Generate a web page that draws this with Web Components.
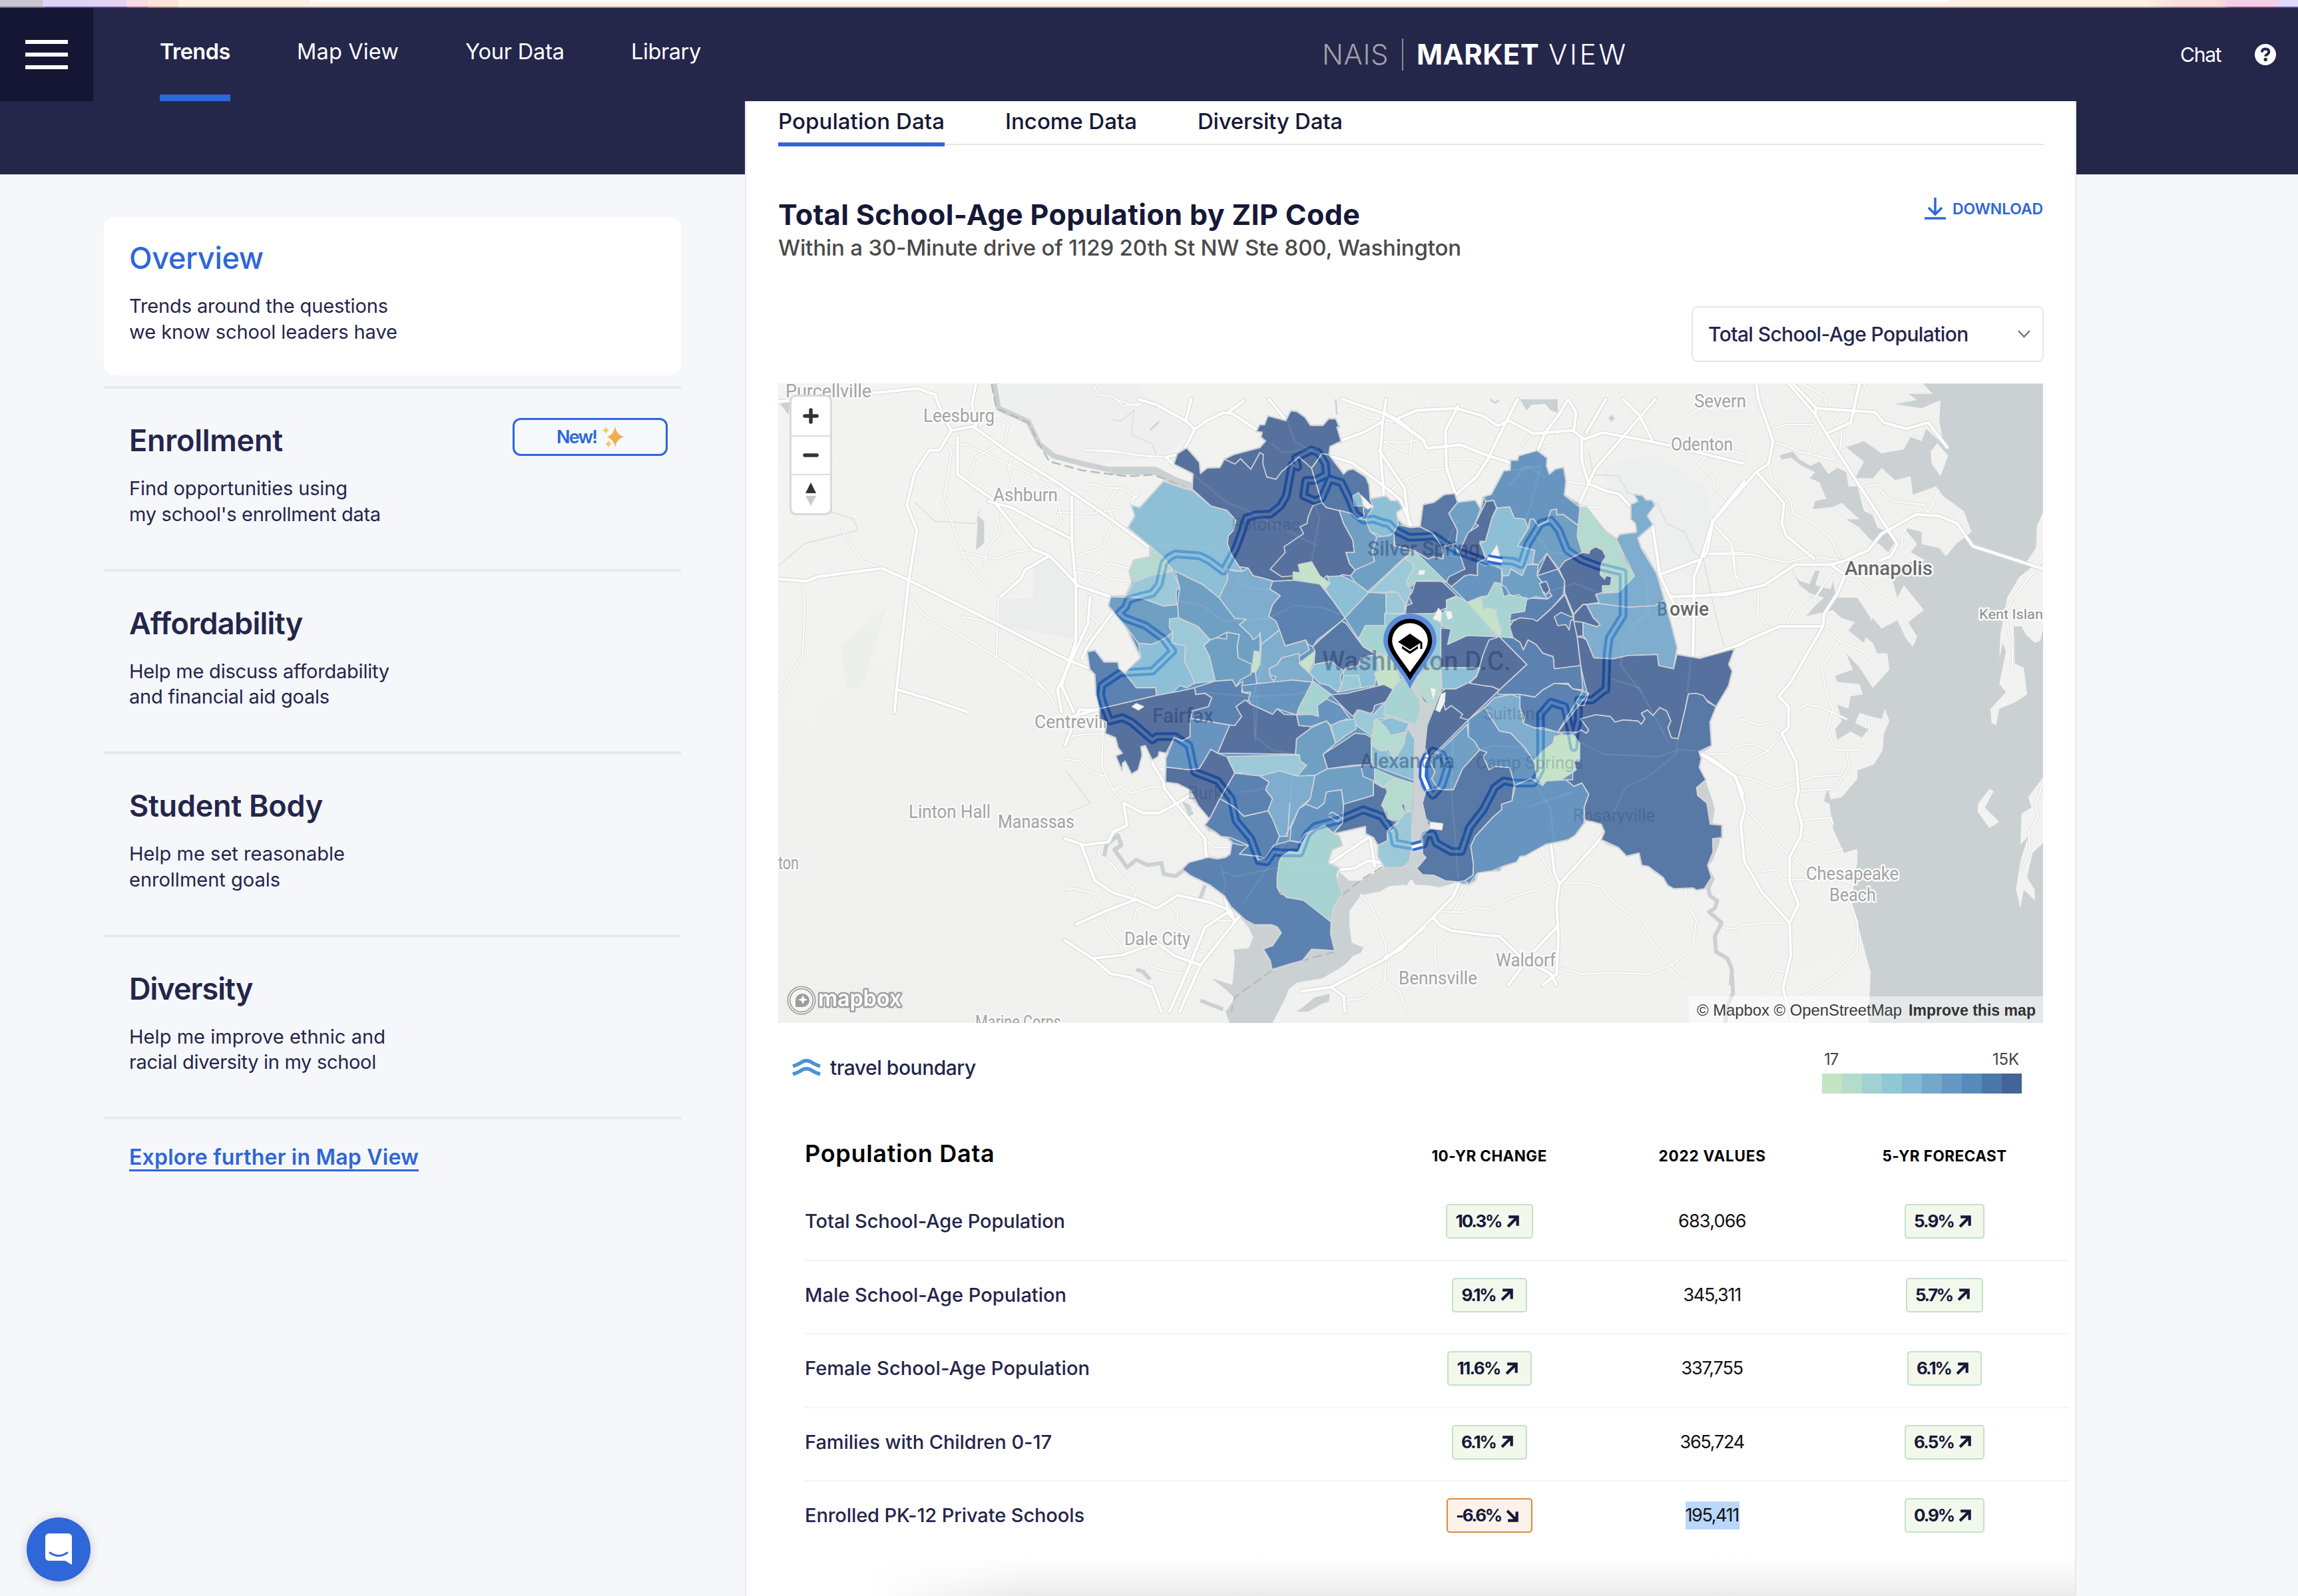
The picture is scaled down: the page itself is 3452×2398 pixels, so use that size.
<!DOCTYPE html>
<html lang="en">
<head>
<meta charset="utf-8">
<title>NAIS Market View</title>
<style>
html,body{margin:0;background:#f5f7fb}
body{width:3452px;height:2398px;overflow:hidden;position:relative;font-family:Inter,"Open Sans","Liberation Sans",sans-serif;color:#24264a}
</style>
</head>
<body>
<market-app></market-app>
<script>
const define=(name,html,init)=>{
  const t=document.createElement('template');t.innerHTML=html;
  customElements.define(name,class extends HTMLElement{
    constructor(){super();this.attachShadow({mode:'open'}).append(t.content.cloneNode(true));}
    connectedCallback(){if(init&&!this.ready){this.ready=true;init.call(this,this.shadowRoot);}}
  });
};

/* One line of text tracked to a given width */
define('t-line',`<style>:host{display:block;white-space:nowrap;flex:none}span{display:inline-block}</style><span><slot></slot></span>`,function(r){
  const w=+this.getAttribute('w'),s=this.getAttribute('s'),f=this.getAttribute('f');
  if(s)this.style.fontSize=s+'px';
  if(f)this.style.fontWeight=f;
  if(this.getAttribute('h'))this.style.lineHeight=this.getAttribute('h')+'px';
  if(w){this.style.width=w+'px';
    const sp=r.querySelector('span'),n=this.textContent.length,nat=sp.getBoundingClientRect().width;
    if(nat&&n>1)sp.style.letterSpacing=((w-nat)/(n-.5)).toFixed(3)+'px';}
});

define('window-edge',`<style>:host{display:block;height:12px;box-sizing:border-box;
background:linear-gradient(90deg,transparent 466px,#fffdfc 466px 2928px,transparent 2928px) 0 0/100% 3px no-repeat,
linear-gradient(90deg,#6d6880 67px,#6a3fae 67px 192px,#a84a80 192px 222px,#b87752 222px 268px,#ab8b78 268px 3240px,#b07070 3260px 3340px,#9c3a88 3350px 3422px,#6743b8 3424px) 0 10px/100% 2px no-repeat,
linear-gradient(90deg,#c9c6d0 64px,#dcd3f8 64px,#e3d3f2 190px,#f9dbe2 190px 222px,#fbe4da 222px 268px,#fdf1e6 268px 3220px,#fae0da 3270px 3330px,#f3d0e8 3345px 3420px,#e0d9fb 3422px)}</style>`);

define('nav-item',`<style>:host{display:flex;flex-direction:column;height:140px;box-sizing:border-box;padding-top:38px;color:#fff;justify-content:space-between}
i{display:block;height:10px}:host([active]) i{background:#2f66d8}</style><slot></slot><i></i>`);

define('top-nav',`<style>
:host{display:flex;height:140px;background:#24264a;color:#fff;align-items:stretch}
.menu{width:140px;background:#151633;display:flex;flex-direction:column;gap:13px;align-items:center;justify-content:center}
.menu b{display:block;width:64px;height:6px;background:#fff}
nav{display:flex;margin-left:100px;gap:100px;width:849px}
.logo{display:flex;align-items:center;margin-left:897px;height:140px;gap:20px}
.logo .m{display:flex;gap:14px}
.logo .v{width:2px;height:48px;background:#8b8b98}
.grey{color:#a0a0a6}
.r{display:flex;margin-left:831px;align-items:center;gap:50px}
</style>
<div class="menu"><b></b><b></b><b></b></div>
<nav><nav-item active><t-line s="32.5" f="600" h="56" w="106">Trends</t-line></nav-item>
<nav-item><t-line s="32.5" f="400" h="56" w="153">Map View</t-line></nav-item>
<nav-item><t-line s="32.5" f="400" h="56" w="149">Your Data</t-line></nav-item>
<nav-item><t-line s="32.5" f="400" h="56" w="105">Library</t-line></nav-item></nav>
<div class="logo"><t-line class="grey" s="42" f="300" h="60" w="100">NAIS</t-line><div class="v"></div>
<div class="m"><t-line s="42" f="700" h="60" w="184">MARKET</t-line><t-line s="42" f="300" h="60" w="118">VIEW</t-line></div></div>
<div class="r"><t-line s="30" f="400" h="40" w="62">Chat</t-line>
<svg width="32" height="32" viewBox="0 0 32 32"><circle cx="16" cy="16" r="16" fill="#fff"/><path d="M10.8 12.6Q11 7.6 16 7.5Q21.4 7.7 21.3 12Q21 14.3 18.2 15.9Q16.2 17 16.2 18.8" fill="none" stroke="#24264a" stroke-width="4"/><circle cx="16.2" cy="23.4" r="2.6" fill="#24264a"/></svg></div>`);

define('side-item',`<style>
:host{display:block;height:274.5px;box-sizing:border-box;border-top:4px solid #e8e9ed;padding:54px 20px 0 38px;color:#24264a}
:host([selected]){background:#fff;border:0;border-radius:17px;height:238px;margin-bottom:16px;padding-top:35px}
.h{display:flex;justify-content:space-between;height:48px}
:host([selected]) .h{color:#2f66d8}
.h ::slotted(new-badge){margin-top:-10px}
.d{display:flex;flex-direction:column;margin-top:29px}
:host([selected]) .d{margin-top:32px}
</style><div class="h"><slot name="title"></slot><slot name="badge"></slot></div><div class="d"><slot></slot></div>`);

define('new-badge',`<style>:host{display:flex;width:233px;height:57px;box-sizing:border-box;border:3px solid #2f66d8;border-radius:12px;background:#f5f9fc;color:#2f66d8;align-items:center;justify-content:center;gap:8px}</style>
<t-line s="27" f="600" h="40" w="61">New!</t-line><svg width="32" height="32" viewBox="0 0 32 32"><path d="M19 0Q20.5 12 32 15.5Q20.500 19 19 31Q17 19 7 15.500Q17 12 19 0Z" fill="#f0ad4c"/><path d="M5 0Q6 4 10 5.500Q6 7 5 11Q4 7 0 5.500Q4 4 5 0ZM9 20Q10 24.500 14 26Q10 27.500 9 32Q8 27.500 4 26Q8 24.500 9 20Z" fill="#f6c860"/></svg>`);

define('side-menu',`<style>:host{display:block;width:867px;margin:174px 0 0 156px;flex:none}
.link{border-top:4px solid #e8e9ed;padding:40px 0 0 38px;color:#2f66d8}
.link div{width:435px;border-bottom:3px solid #2f66d8;height:35px}</style>
<side-item selected><t-line slot="title" s="45" f="500" h="53" w="202">Overview</t-line><t-line s="29" h="38.5" w="389">Trends around the questions</t-line><t-line s="29" h="38.5" w="403">we know school leaders have</t-line></side-item>
<side-item><t-line slot="title" s="45" f="600" h="48" w="231">Enrollment</t-line><new-badge slot="badge"></new-badge><t-line s="29" h="38.5" w="328">Find opportunities using</t-line><t-line s="29" h="38.5" w="378">my school's enrollment data</t-line></side-item>
<side-item><t-line slot="title" s="45" f="600" h="48" w="261">Affordability</t-line><t-line s="29" h="38.5" w="391">Help me discuss affordability</t-line><t-line s="29" h="38.5" w="301">and financial aid goals</t-line></side-item>
<side-item><t-line slot="title" s="45" f="600" h="48" w="291">Student Body</t-line><t-line s="29" h="38.5" w="324">Help me set reasonable</t-line><t-line s="29" h="38.5" w="227">enrollment goals</t-line></side-item>
<side-item><t-line slot="title" s="45" f="600" h="48" w="186">Diversity</t-line><t-line s="29" h="38.5" w="385">Help me improve ethnic and</t-line><t-line s="29" h="38.5" w="371">racial diversity in my school</t-line></side-item>
<div class="link"><div><t-line s="32" f="600" h="34" w="435">Explore further in Map View</t-line></div></div>`);

define('data-tabs',`<style>:host{display:flex;gap:91px;height:66px;box-sizing:border-box;border-bottom:2px solid #e5e5e5;padding-top:4px;color:#161838}
.t{height:64px;box-sizing:border-box;padding-top:6px}.on{border-bottom:6px solid #2f66d8}</style>
<div class="t on"><t-line s="33" f="500" h="40" w="250">Population Data</t-line></div><div class="t"><t-line s="33" f="500" h="40" w="198">Income Data</t-line></div><div class="t"><t-line s="33" f="500" h="40" w="218">Diversity Data</t-line></div>`);

/* Map drawing data. Each letter starts a survey sheet with its own origin and scale; points follow. */
const sheets={A:[1600,600,.3444,.3333],B:[2080,600,.3444,.3333],C:[1600,1040,.3444,.3333],D:[2080,1000,.3444,.3333],E:[2560,570,.3333,.6186],F:[1160,570,.6122,.3333]};
const pts=s=>{let t,o=[];for(const k of s.trim().split(/\s+/)){if(sheets[k]){t=sheets[k];continue}const[a,b]=k.split(',');o.push((t[0]+a*t[2]).toFixed(1)+','+(t[1]+b*t[3]).toFixed(1))}return o.join(' ')};
const ramp={0:'#57719e',x:'#5878a5',1:'#5b82b1',2:'#6795c0',3:'#709fc4',4:'#7eadce',5:'#8dbfd6',6:'#9bc9d7',7:'#a7d3d2',8:'#b5dacf',9:'#c4e3c8'};
const outline='A 530,220 565,260 585,285 590,335 620,310 675,308 695,270 735,250 850,218 875,188 855,170 860,148 835,145 848,115 870,115 885,75 962,97 985,52 1010,55 1045,80 1070,118 1125,118 1150,88 1180,88 1195,125 1185,125 1203,188 1155,212 1150,250 1215,338 1232,320 1258,315 1310,350 1325,385 1330,450 1380,440 1400,437 1420,458 1452,458 1470,490 1445,510 1447,535 1475,565 1510,578 1550,575 B 155,575 168,475 215,465 260,430 305,425 318,465 395,455 418,495 430,440 465,430 520,323 548,320 550,275 580,275 585,255 625,255 665,232 708,265 705,300 718,338 745,315 780,308 790,370 783,432 845,468 852,487 880,487 960,592 1012,632 1025,610 1100,600 1095,560 1075,540 1075,475 1105,460 1090,430 1125,435 1140,455 1165,455 1178,478 1150,495 1145,525 1168,565 1103,625 1118,670 1130,685 1185,785 1210,870 1248,1010 1275,1120 1270,1150 1375,1168 1525,1125 1500,1195 1515,1225 1500,1290 1480,1325 1445,1385 D 1445,185 1418,255 1425,360 1400,380 1370,388 1380,420 1372,460 1400,515 1360,550 1365,585 1405,620 1420,715 1470,720 1470,775 1430,780 1432,840 1408,900 1425,955 1395,1005 1360,1012 1345,1002 1260,1005 1235,990 1215,955 1180,930 1150,905 1122,900 1110,845 1055,858 1020,820 975,805 945,785 960,750 945,715 875,695 870,710 830,765 800,785 705,805 665,820 615,857 590,860 575,885 515,905 500,925 470,925 430,925 405,935 395,970 370,985 335,985 325,975 265,970 215,945 165,942 140,915 155,885 180,865 165,850 118,850 100,900 75,910 0,910 C 1393,790 1365,740 1365,690 1345,655 1312,638 1310,605 1170,638 1195,650 1208,690 1165,710 1145,770 1195,795 1180,825 1208,910 1170,970 1160,1040 1158,1090 1175,1165 1075,1158 1035,1210 990,1222 945,1243 903,1250 895,1210 875,1190 865,1158 905,1143 943,1085 925,1058 900,1048 870,1055 825,1048 815,1035 788,1028 725,968 695,918 630,868 545,825 512,798 540,768 595,758 625,745 665,752 700,745 720,730 728,680 710,660 680,650 655,630 625,622 610,600 630,572 580,510 555,480 545,440 490,412 438,405 440,340 440,300 445,270 410,268 405,290 380,305 350,240 330,245 335,285 318,350 290,368 262,310 250,320 248,350 235,320 222,288 250,275 232,250 220,205 175,185 182,135 150,120 150,75 A 135,1330 130,1240 108,1215 97,1138 130,1132 170,1185 230,1185 235,1215 260,1235 330,1165 265,1025 190,930 200,890 265,885 290,825 280,775 300,725 370,710 370,660 275,578 305,525 290,478 325,490 430,370 480,390 555,405 558,335 510,310 475,292 490,245';
const zips=`5 A 430,370 480,390 560,415 635,480 705,500 745,545 735,590 712,615 708,650 725,700 760,755 775,775 705,765 710,810 672,895 600,835 470,770 430,715 370,660 275,578 305,525 290,478 325,490
0 A 530,220 565,260 585,285 590,335 620,310 675,308 695,270 735,250 850,218 875,188 855,170 860,148 835,145 848,115 870,115 885,75 962,97 985,52 1010,55 1045,80 1070,118 1125,118 1150,88 1180,88 1195,125 1185,125 1203,188 1155,212 1150,250 1120,245 1075,310 1120,465 1140,488 1195,500 1215,560 1255,635 1262,690 1225,690 1240,740 1265,770 1245,795 1210,790 1180,808 1140,795 1110,830 1000,815 920,822 860,805 820,795 797,760 760,755 725,700 708,650 712,615 735,590 745,545 705,500 635,480 555,405 558,335 510,310 475,292 490,245
x A 1120,245 1150,250 1215,338 1232,320 1258,315 1310,350 1325,385 1330,450 1345,485 1300,490 1305,530 1270,540 1250,515 1140,488 1120,465 1075,310 1090,290
9 A 1017,745 1075,732 1110,795 1155,830 1135,855 1110,832 995,812 995,778 1025,782
3 A 1195,500 1250,515 1275,540 1315,540 1330,595 1360,620 1340,690 1350,730 1300,760 1265,770 1240,740 1225,690 1262,690 1255,635 1215,560
5 A 1310,540 1345,485 1330,450 1380,440 1400,437 1420,458 1452,458 1470,490 1445,510 1455,580 1415,615 1380,620 1330,595
5 A 1255,435 1280,420 1305,465 1300,482 1262,480
3 A 1360,620 1415,615 1435,600 1435,660 1515,680 1320,868 1265,825 1245,795 1265,770 1350,730 1340,690
5 A 1145,800 1205,795 1265,825 1325,870 1220,985 1170,910 1135,855 1155,830
6 A 1325,870 1520,680 1545,740 1490,830 1510,860 1480,950 1450,880 1430,865 1400,870
3 A 1325,870 1400,875 1400,965 1420,965 1420,1020 1310,1020 1280,1080 1220,985
6 A 1400,870 1450,870 1480,920 1480,965 1425,965 1400,965
6 B 0,965 90,968 215,965 250,1020 245,1200 130,1290 0,1200
0 B 135,820 250,820 315,885 270,905 270,940 215,965 90,968 95,930 120,920 105,890 120,870
1 A 905,820 1000,815 1110,832 1170,910 1220,985 1205,1000 1100,1085 1080,1115 1060,1105 1050,1085 960,1112 930,1040 915,1000 888,978 905,925 938,885 893,855
4 A 705,765 740,775 775,775 797,760 820,795 860,805 905,820 893,855 938,885 905,925 888,978 920,1000 935,1040 855,1105 850,1050 840,1085 820,1085 810,1065 760,1015 790,990 740,988 672,895 710,810
3 A 480,775 600,835 672,895 740,988 790,990 760,1015 810,1065 820,1085 850,1060 850,1110 850,1150 825,1135 812,1230 755,1165 750,1115 760,1060 705,1050 660,1075 632,1085 580,1025 495,985 490,930 500,850
8 A 375,665 430,715 470,770 440,785 370,795 300,825 280,775 300,725 370,710
6 A 300,825 370,795 470,775 500,850 485,860 485,925 430,932 330,895 265,885
3 A 200,890 330,895 430,932 490,925 495,985 455,1000 470,1050 430,1080 380,1105 320,1100 265,1025 190,930
6 A 455,990 495,985 580,1025 632,1085 605,1110 630,1160 655,1270 600,1275 565,1280 550,1240 520,1210 525,1110 465,1100 470,1050 455,1030
5 A 320,1100 380,1105 430,1080 470,1050 465,1100 525,1110 520,1180 550,1240 565,1280 530,1300 500,1290 470,1320 398,1335 395,1300 310,1300 260,1235 330,1165
3 A 632,1085 660,1075 705,1080 705,1050 760,1060 750,1115 755,1165 815,1195 810,1240 765,1265 745,1295 730,1265 655,1270 630,1160 605,1110
9 A 828,1135 855,1140 850,1195 830,1230 812,1230
4 A 855,1105 935,1040 960,1112 1050,1085 1065,1130 1020,1160 945,1165 925,1195 890,1215 895,1250 920,1280 835,1280 830,1230 850,1195
4 A 890,1215 925,1195 945,1165 1020,1145 1025,1190 1080,1250 1080,1275 990,1265 905,1280 920,1250 895,1245
9 A 1090,1135 1080,1190 1060,1230 1020,1190
x A 1205,1000 1225,1010 1275,1080 1300,1115 1355,1150 1290,1165 1280,1200 1225,1210 1215,1225 1160,1180 1085,1195 1090,1135 1080,1115 1110,1085
7 A 1280,1080 1310,1020 1420,1020 1400,1100 1400,1150 1355,1145 1300,1115
5 A 1085,1195 1160,1180 1215,1225 1200,1250 1205,1290 1190,1320 1150,1290 1110,1280 1065,1230
5 A 1215,1225 1225,1210 1280,1200 1290,1165 1355,1150 1370,1180 1350,1290 1290,1300 1280,1245 1215,1245
6 A 1215,1245 1280,1245 1290,1300 1190,1320 1205,1290
7 B 130,1260 90,1290 50,1300 0,1400 0,1520 150,1480 155,1400 125,1310
9 A 1360,1150 1430,1160 1460,1260 1430,1310 1390,1320 1365,1285 1350,1235 1370,1225
0 A 1160,1332 1230,1325 1390,1285 1435,1310 1410,1360 1350,1380 1345,1405 1320,1425 1275,1400 1255,1430 1215,1390
1 A 97,1138 130,1132 170,1185 230,1185 235,1215 260,1235 310,1300 395,1300 398,1335 150,1395 135,1330 130,1240 108,1215
0 C 150,75 398,15 500,-5 565,-20 570,10 610,5 640,25 625,65 555,85 545,200 510,220 475,205 440,275 410,268 405,290 380,305 350,240 330,245 335,285 318,350 290,368 262,310 250,320 248,350 235,320 222,288 250,275 232,250 220,205 175,185 182,135 150,120
1 C 565,-20 655,-50 730,-55 745,-25 775,-50 770,0 810,10 800,35 745,65 770,110 740,150 715,148 550,118 555,85 625,65 640,25 610,5 570,10
2 C 770,-30 900,-45 990,-55 1075,-45 1080,-25 1040,30 1020,70 1010,102 925,75 905,100 810,55 800,30 810,0 775,0
0 C 745,65 785,35 810,55 905,100 925,75 955,100 1010,102 1020,150 1070,155 1075,170 1010,210 1005,280 665,275 690,215 715,148 740,150 770,110
7 C 1080,-50 1160,10 1140,30 1100,60 1105,110 1075,100 1010,102 1020,70 1040,30
2 C 1010,102 1075,100 1105,110 1100,60 1140,30 1200,60 1265,150 1230,120 1160,150 1140,130 1070,155 1020,150
2 C 545,118 718,148 690,215 665,275 635,258 620,300 585,345 540,350 440,338 440,300 475,205 510,220 545,200
6 C 705,290 1022,283 1025,310 1053,330 1012,378 935,355 870,375 805,378 790,362 740,365
3 C 1075,160 1140,130 1155,150 1180,230 1125,280 1145,345 1090,375 1012,378 1053,330 1025,310 1022,283 1005,280 1010,210
0 C 440,338 540,350 585,345 635,258 665,275 705,290 740,365 675,480 630,572 580,510 545,440 490,412 438,405
1 C 740,365 850,378 890,405 875,440 905,480 885,535 780,560 740,520 675,480
1 C 675,480 740,520 780,560 885,535 905,570 935,650 910,710 870,750 850,740 760,730 765,705 800,690 720,655 680,650 655,630 610,600 630,572
4 C 850,378 935,355 1012,378 1090,375 1070,480 1020,525 985,600 960,650 935,650 905,570 885,535 905,480 875,440 890,405
3 C 1090,375 1145,345 1290,330 1300,380 1345,400 1345,465 1215,505 1205,440 1140,450 1130,500 1100,525 1050,505 1070,480
2 C 1050,505 1100,525 1130,500 1140,450 1205,440 1215,520 1210,590 1170,635 1130,600 1045,640 1025,675 980,670 985,610 1020,525
x C 1215,505 1345,465 1345,405 1385,430 1405,430 1405,480 1385,510 1405,570 1450,585 1405,625 1405,670 1365,690 1345,655 1312,638 1310,605 1170,638 1210,590
x C 1125,280 1200,230 1265,185 1310,190 1335,205 1335,325 1250,330 1145,345
5 C 1160,150 1200,130 1265,120 1270,165 1225,195 1180,230
6 C 1260,110 1285,80 1345,100 1400,40 1400,115 1350,125 1340,200 1270,150
7 C 1400,40 1440,-30 1490,-90 1540,0 1550,80 1530,145 1490,135 1450,115 1390,100
5 C 1335,205 1440,300 1490,180 1500,145 1525,190 1525,400 1340,330
8 C 1350,125 1375,130 1410,170 1420,195 1485,180 1480,230 1440,300 1410,260 1375,265 1340,240
5 C 1370,130 1420,115 1500,140 1485,180 1420,195 1400,160
7 C 1350,345 1440,385 1390,430 1350,400
8 C 1440,385 1518,410 1512,540 1485,535 1480,500 1465,510 1485,550 1475,580 1410,570 1405,540 1380,510 1405,450 1395,420
6 C 1485,540 1512,540 1512,700 1500,765 1470,790 1395,790 1365,740 1365,690 1405,670 1405,625 1425,625 1450,590
1 C 728,680 765,690 800,690 760,730 835,740 840,755 870,750 910,690 980,670 1035,680 1015,725 980,718 935,760 925,830 925,880 940,910 1040,938 1160,1035 1158,1090 1175,1165 1075,1158 1035,1210 990,1222 903,1250 895,1210 865,1158 905,1143 943,1085 925,1058 900,1048 825,1048 788,1028 725,968 695,918 630,868 545,825 512,798 540,768 625,745 665,752 700,745 720,730
7 C 935,760 945,740 980,718 1015,725 1035,680 1060,640 1130,600 1170,638 1195,650 1208,690 1165,710 1145,770 1195,795 1180,825 1208,910 1170,970 1160,1035 1040,938 965,925 925,880 925,830
x B 155,575 168,475 215,465 260,430 305,425 318,465 280,515 318,590 310,650 250,665 210,605
x B 40,600 60,565 110,578 155,575 210,605 250,665 255,720 215,710 190,720 125,680 45,660
3 B 318,465 395,455 418,495 395,560 370,600 355,620 325,690 295,655 310,650 318,590 280,515
2 B 125,680 190,720 215,710 255,720 260,665 295,655 335,710 350,765 270,825
0 B 443,460 475,455 488,490 470,530 440,640 415,640 440,720 405,735 405,795 375,790 290,845 270,825 280,800 350,765 325,690 365,600 410,570 395,560
2 B 430,440 465,430 520,323 548,320 550,275 580,275 585,255 665,232 708,265 705,300 718,338 745,315 780,308 790,370 783,432 852,487 845,570 780,520 750,520 750,495 725,500 710,550 670,570 650,540 635,540 625,580 610,540 565,535 545,485 490,490 475,455 443,460
5 B 490,490 545,485 565,535 610,540 625,580 580,660 655,680 645,745 620,745 600,795 550,765 540,795 515,795 510,765 455,740 415,650 440,640 470,530
3 B 628,580 635,540 650,540 670,570 710,550 725,500 750,495 750,520 780,520 845,570 840,620 862,690 785,730 780,755 760,765 708,695 670,745 645,740 655,680 580,660
8 B 852,487 880,487 960,592 1012,632 1050,730 1090,797 1035,865 950,870 940,790 945,740 965,710 950,680 920,665 892,695 862,690 840,610
4 B 1012,632 1025,610 1100,600 1095,560 1075,540 1075,475 1105,460 1090,430 1125,435 1140,455 1165,455 1178,478 1145,525 1168,565 1103,625 1118,670 1185,785 1210,870 1248,1010 1275,1120 1270,1150 1260,1215 1195,1200 1190,1150 1060,1155 995,1170 912,1165 880,1085 865,1065 865,1005 925,1025 940,1015 910,985 880,925 935,915 920,875 1020,870 1090,797
0 B 785,730 862,690 892,695 895,680 920,665 950,680 965,710 945,740 940,790 960,810 965,795 990,800 985,840 950,840 950,870 920,880 935,915 880,925 825,970 785,870 785,820 760,765
1 B 665,795 755,765 785,820 780,880 725,945 665,1000 600,985 545,1000 550,965 610,955 620,895 710,900 730,885
0 B 708,695 755,765 665,795
3 B 515,795 540,795 550,765 600,795 620,745 670,745 665,795 690,830 690,870 710,900 660,890 610,905 585,880 550,890 530,850 510,835
0 B 675,830 705,820 720,860 705,880 690,865
2 B 350,795 375,790 405,795 405,735 440,750 480,750 510,765 510,835 480,830 450,885 420,890 360,915 290,845
7 B 480,825 505,830 520,890 545,880 580,890 620,895 610,955 550,965 545,1000 560,1075 500,1075 360,915 420,895 450,885
9 B 360,915 420,895 430,950 450,940 490,950 485,970 510,1045 500,1070
7 B 270,905 320,890 360,915 495,1070 360,1065 275,1105 290,1035 250,1020 245,980 270,940
7 B 125,680 270,825 210,815 135,820 120,840 105,845 95,820 125,760 120,740 90,720
0 B 545,1025 560,1000 590,985 645,990 665,1000 725,945 785,880 820,970 840,1070 855,1200 740,1215 735,1160 690,1145 660,1105 625,1085 605,1130 590,1095 560,1075
1 B 740,980 770,960 800,975 830,985 810,1000 805,1040 790,1015 755,1020
0 B 825,1000 865,1005 865,1065 840,1070
0 B 825,970 865,925 880,925 910,985 940,1015 925,1025 865,1005 825,1000
0 B 840,1070 865,1075 880,1085 912,1165 995,1170 1060,1155 1190,1150 1195,1200 1260,1215 1275,1150 1375,1168 1525,1125 1500,1195 1515,1225 1500,1290 1480,1325 1445,1385 1410,1360 1380,1335 1325,1328 D 1310,200 1280,330 1250,325 1235,280 1248,250 1230,205 1200,190 1170,225 1145,200 1120,215 1135,240 1120,265 1105,250 1040,245 1005,255 985,230 920,222 855,240 890,290 880,305 855,290 845,300 755,300 885,130 865,50 855,0
x D 1280,330 1310,200 1325,128 1360,125 1390,135 1410,165 1445,185 1418,255 1425,360 1370,388 1380,420 1372,460 1400,515 1360,550 1365,585 1405,620 1420,715 1470,720 1470,775 1430,780 1432,840 1408,900 1425,955 1395,1005 1360,1012 1345,1002 1260,1005 1235,990 1215,955 1150,905 1122,900 1110,845 1055,858 1020,820 945,785 960,750 945,715 875,695 870,640 890,580 860,530 825,545 790,515 820,515 820,430 850,430 850,350 820,305 845,300 855,290 880,305 890,290 855,240 920,222 985,230 1005,255 1040,245 1105,250 1120,265 1135,240 1120,215 1145,200 1170,225 1200,190 1230,205 1248,250 1235,280 1250,325
1 B 560,1075 590,1095 605,1130 625,1085 660,1105 690,1145 735,1160 740,1215 855,1200 865,1310 820,1305 800,1280 740,1282 690,1310 655,1342 590,1330 500,1330 490,1320 620,1195 500,1070
1 D 590,130 655,142 690,110 740,80 800,85 820,105 865,115 755,300 690,280 650,280 605,260 610,235 590,190
4 D 480,145 550,130 590,145 590,190 605,260 650,280 755,300 780,310 740,320 735,350 690,385 650,430 610,370 550,305 500,295 435,190
2 D 365,245 435,190 500,295 550,305 610,370 650,430 670,520 635,510 570,540 550,520 545,460 480,455 455,470 430,410 445,390 415,380 365,320
3 D 195,430 360,265 365,320 390,340 415,380 340,465 300,560 250,560 230,550 205,510 220,480
9 D 650,430 690,385 735,350 740,320 820,310 850,350 850,430 825,430 835,470 770,515 705,520 690,540 665,510
2 D 570,540 635,510 690,540 705,520 790,515 825,545 860,530 890,580 870,640 870,710 830,765 800,785 705,805 615,857 590,860 575,885 515,905 470,925 405,935 370,985 345,970 385,945 387,895 375,815 395,770 475,680 510,650 510,625 555,610
x D 230,555 250,560 300,560 340,465 415,380 445,390 430,410 455,470 480,455 545,460 565,530 555,610 510,625 510,650 475,680 395,770 375,815 387,895 385,945 350,970 325,975 265,970 215,945 165,942 140,915 180,865 165,850 165,770 200,710 180,690 165,620 180,565
0 D 500,110 365,245 195,420 175,370 185,270 210,195 245,120 265,105 310,105 365,75 430,90 470,95
0 B 245,1030 290,1035 275,1105 360,1065 500,1070 620,1195 500,1310 470,1295 430,1290 370,1280 400,1250 415,1210 245,1210
5 B 245,1210 415,1210 400,1250 370,1275 310,1305 250,1305
8 B 130,1260 200,1200 245,1210 245,1310 215,1400 190,1370 130,1290`.split('\n');
const lines=`A 695,270 740,292 765,268 810,315 850,240 865,250 862,290 880,350 920,360 945,325 1020,260 1075,310
A 1120,465 1080,480 1060,530 1055,560 1025,575 1040,605 955,665 960,690 895,765 945,800 1000,795
B 455,1085 495,1072
B 370,1275 400,1250 430,1150 455,1085
B 830,960 865,925 930,920 1060,937 1180,930 1220,905
D 865,115 890,125 870,180 845,180 835,165
D 245,120 265,200 290,180 340,220 330,235 365,245
C 980,500 970,650 960,650
C 1150,550 1165,540 1205,565 1190,585 1150,560`.split('\n');
const land2=`A 1290,430 1345,485 1320,495 1300,480
B 490,655 510,735 450,720
B 210,990 235,940 250,960 245,1005
B 265,955 290,955 298,985 275,995
B 150,770 178,770 172,790 145,792
B 198,1300 225,1305 212,1360
C 290,65 310,50 345,65 320,82
D 200,705 255,712 250,742 195,735
D 245,130 265,120 262,165 240,210 222,200`.split('\n');
const water=`E 985,10 1530,10 1530,1570 740,1570 750,1440 690,1320 655,1260 690,1175 690,1140 630,1150 580,1090 565,1030 540,1025 555,990 570,1020 620,1015 690,970 690,950 765,935 805,900 810,860 835,830 815,800 800,825 760,820 700,810 680,835 740,850 710,870 660,855 600,875 590,850 620,830 600,790 650,800 660,770 715,765 700,740 600,735 590,720 670,705 640,665 700,700 760,750 835,705 825,665 780,665 760,640 700,615 760,580 800,605 870,585 910,630 940,650 960,625 920,590 990,560 900,500 870,530 850,490 780,460 850,470 920,445 1000,440 930,420 960,400 900,360 980,370 980,400 1060,410 1090,430 1135,400 1205,370 1170,320 1080,285 1045,260 940,280 930,235 860,245 800,215 760,240 680,240 720,200 640,165 720,150 800,180 900,170 930,140 980,150 1000,120 1080,160 1060,100 1065,50 980,70 860,60 960,50 920,35 1030,35
E 340,185 400,175 430,195 480,210 520,200 560,230 600,215 640,225 650,260 690,260 720,320 760,330 780,360 830,370 860,395 830,420 790,400 750,390 700,360 640,340 700,340 620,300 580,310 490,315 500,295 550,290 520,250 475,240 500,225 440,210 390,190 350,195
E 380,445 400,470 430,490 490,500 470,520 465,510 500,465 520,465 500,500 570,510 580,490 595,530 690,530 750,580 720,640 650,610 680,590 620,580 580,560 460,575 500,550 540,530 480,520 430,500
C 1195,810 1240,850 1290,850 1395,790 1500,770 1520,700 1568,700 1568,860 1530,870 1510,840 1490,870 1430,865 1370,900 1290,915 1240,985 1240,1050 1250,1130 1300,1150 1310,1130 1290,1175 1255,1190 1230,1220 1190,1250 1120,1290 1010,1310 975,1340 960,1380 930,1440 900,1500 720,1500 700,1440 740,1380 700,1340 640,1290 730,1320 740,1200 735,1160 800,1155 820,1105 800,1060 760,1010 825,1020 960,1000 1150,1000
D 0,905 110,850 140,800 330,970 290,985 240,1000 190,990 150,990 110,960 70,990 0,995
C 1010,1440 1050,1410 1090,1375 1155,1360 1150,1395 1120,1405 1060,1440
B 590,0 755,0 755,60 725,50 700,20 640,25 620,50
B 975,85 990,70 1005,85 990,102
D 1365,550 1400,520 1430,610 1440,650 1430,710 1470,720 1460,800 1430,880 1410,905 1440,960 1420,1010 1395,1000
F 505,615 520,640 520,740 500,770
C 510,490 545,510 560,550 540,560
F 20,110 45,100 40,160`.split('\n');
const isles=`E 1530,320 1500,355 1495,410 1450,445 1490,450 1420,480 1365,530 1335,620 1330,680 1345,640 1360,660 1330,740 1360,760 1290,800 1295,835 1315,840 1330,800 1400,785 1455,765 1440,700 1400,690 1395,600 1430,600 1450,620 1490,640 1515,635 1530,600
E 1285,995 1305,1000 1265,1040 1330,1075 1285,1090 1232,1050 1235,1030
E 1530,965 1460,1015 1475,1040 1430,1055 1425,1130 1460,1110 1425,1170 1405,1240 1425,1285 1440,1240 1490,1265 1490,1240 1455,1210 1480,1150 1530,1125
E 1020,175 1050,155 1100,185 1065,235 1025,205`.split('\n');
const major=`F 500,20 490,110 500,210 440,230 410,320 385,320 350,420 330,565 355,680 335,905 305,1400 300,1500
F 495,215 590,340 700,465 835,635 1000,860
F 15,900 85,910 110,890 225,862 270,852 335,905 560,1110 720,1260 800,1320
F 455,260 455,430 540,540 600,680 640,765 680,795 720,870 750,930 830,980
F 735,530 735,720 745,930 745,1180 710,1380 740,1500
F 840,1040 775,1200 760,1260
F 780,980 775,1100 700,1400 710,1500
F 310,1400 400,1450 480,1500
F 15,100 200,70 310,50 355,40 400,70 420,170 440,230
F 560,980 610,900 620,860 680,795
F 530,550 590,580 650,640 735,720
A 320,0 400,25 530,100 565,135 620,95 690,60 730,65 840,140
A 710,60 780,5
A 550,0 525,100
A 565,135 510,245 440,260 480,300
A 890,0 960,90
A 1210,0 1280,25 1380,60 1420,80 1568,190
A 1400,0 1385,100 1375,230 1390,440
A 1370,230 1480,400 1500,570
A 1150,255 1250,285 1390,390 1460,450 1510,570
A 1195,190 1300,150 1385,100
B 0,60 60,95 165,180 185,220 330,205 440,250 545,285
B 60,85 140,50 310,40 430,75 495,120 540,95 650,155 820,140 870,180 950,150 1160,190 1250,210 1568,290
B 580,0 530,100 450,270 400,350 310,430
B 800,0 760,70 700,150 670,225
B 320,30 265,140 270,310 310,430
B 1180,0 1030,180 920,310 845,480
B 965,0 880,150
B 800,0 835,60 825,140
B 1040,0 1110,70 1165,180
B 860,180 860,280 890,380 970,415 1020,425 1070,480
B 1568,370 1430,550 1380,720 1350,800 1345,1160
B 1168,570 1185,680 1200,790 1250,900 1270,930
B 1200,790 1370,725
B 1250,890 1500,880 1568,860
B 1375,1168 1568,1100
C 0,1120 120,1200 200,1270 280,1285 380,1330 420,1440
C 50,1045 180,985 310,935 400,975 490,915 640,950 720,985 740,1030
C 0,660 70,685 130,850 210,905 310,935
C 375,290 385,330 430,405 430,430 490,510 610,660 615,740 660,755
C 695,920 715,1000 740,1030
C 760,1010 590,1230 500,1440
C 455,1440 540,1240 610,1060 720,985
C 120,1200 250,1185 400,1130 480,1190 590,1230
C 255,500 270,600 210,630 190,675 70,690
C 255,500 340,545 410,545 490,500 550,460
C 0,240 60,80 150,80
C 0,120 150,75
C 1030,1348 1160,1330 1400,1200 1568,1060
C 1160,1330 1215,1370 1220,1440
C 1150,775 1330,650 1350,785
C 1145,770 1195,800 1260,795 1320,760 1390,770
D 325,980 300,1040 215,1130 70,1280 0,1315
D 215,1140 240,1170 290,1195 440,1215 500,1220 600,1320 725,1390 750,1440
D 725,805 740,930 762,985 750,1080 758,1220 750,1390 690,1440
D 762,985 925,800 955,760
D 750,1180 640,1300 540,1440
D 1370,400 1400,405 1440,430 1530,500 1565,580
E 235,10 245,50 310,150 290,205 235,225 40,345 15,415 0,430
E 235,225 360,300 350,350 370,380 495,435
E 380,10 500,85 600,175 870,400 840,430 790,440
E 0,525 100,520 270,500 410,450 570,450 635,440 740,415 800,375 955,328 1060,332 1140,350 1210,405 1525,460
E 135,650 210,630 340,600 535,600
E 570,450 635,475 600,520 540,570 535,600 390,735 335,770 380,795 380,845 350,860 415,930 425,1000 412,1030 440,1080 435,1110 385,1160 385,1220 425,1275 385,1320 390,1400 355,1480 400,1565
E 0,915 140,965 185,1040 165,1080 180,1170 260,1245 385,1320
E 500,70 770,80 810,105 910,120 1010,105 1095,165
E 550,132 660,105 700,10
E 500,90 505,70 400,10`.split('\n');
const minor=`F 500,210 560,180 580,200 570,280 500,350 485,420
F 430,290 440,330 420,560 440,640 470,800 530,940
F 440,310 470,290 600,400 720,490
F 590,340 580,400 590,460 570,550 560,620
F 640,430 700,530 710,640 690,680
F 700,600 780,605 840,590 900,520
F 770,500 780,470 820,490 860,490 890,530 880,570
F 840,640 820,560 850,490
F 740,800 810,760 835,650
F 335,970 370,1060 450,1140 620,1330 670,1400 700,1480
F 465,1070 550,1100 600,1190 625,1170
F 470,780 550,810 590,780 640,765
F 545,570 560,690 530,750 520,830
F 750,940 830,830 890,860 880,910
F 745,850 800,870 830,900 880,910
F 750,1010 800,1100 770,1180
F 170,680 220,820 270,852
F 75,940 80,1020 75,1240 15,1430
F 650,1200 630,1320 670,1400
F 770,320 830,320 890,340 965,350
F 790,30 800,70 840,80 860,120 930,100
F 555,980 550,1250 640,1370
C 0,300 60,310 110,360 180,380 210,440 255,500
C 210,440 240,425 290,455 370,430 430,425
C 150,990 190,1080 240,1140 255,1200
C 150,690 145,730 210,780 260,850 300,890 310,935
C 300,1035 310,985 350,960
C 455,950 490,1000 490,1040 540,1080
C 610,1060 670,1030 740,1030
C 350,1190 380,1240 450,1260 510,1265 550,1295
C 520,1200 540,1150 640,1180
C 0,890 40,885 120,905 150,970
C 615,665 650,700 720,700
C 400,350 420,345 440,360
C 1290,915 1340,970 1400,1140 1395,1300 1460,1350 1490,1440
C 1220,1390 1300,1380 1395,1300
C 165,190 160,330 180,380
C 20,200 90,190 170,185
D 780,980 880,980 950,1000 1000,1070 1100,1140 1170,1250 1250,1350 1310,1410
D 1315,1005 1310,1055 1360,1150 1340,1280 1250,1350 1150,1390 1000,1385 860,1390 770,1365
D 745,960 670,1010 560,1040 460,1100 400,1090 340,1112 240,1110
D 665,825 720,930 760,980
D 360,990 300,1110
D 290,1195 220,1260 220,1340 235,1400
B 0,190 80,195 165,180
B 90,360 190,320 270,310
B 0,430 90,360 170,470
B 270,270 380,270 440,300
B 600,210 640,150
B 760,150 740,200 670,225
B 110,250 120,150 170,30
B 790,370 890,385
B 850,480 930,490 970,440
B 1568,250 1450,200 1370,290 1430,350 1440,400 1500,460
B 1430,560 1510,650 1530,800 1560,860
B 1390,695 1568,690
B 1310,80 1400,30
A 220,0 300,30 330,25
A 90,228 240,240 380,260
A 1240,40 1320,80 1480,110
A 1480,60 1560,45
A 1380,190 1490,240
E 290,205 300,240 390,295 400,325 480,345 570,385 610,430
E 310,120 370,110 490,110 500,130 470,180
E 310,150 430,175 580,195 610,180 620,130 560,85 540,40 440,10
E 40,350 110,390 135,420 140,475 245,520 240,570 300,610
E 0,425 210,425 370,445 480,430 610,440
E 700,265 770,255 840,295 990,305 1010,325 1055,270
E 895,410 890,375 950,335
E 640,475 700,480 780,525 830,535 860,550
E 540,605 610,635 730,665 760,690
E 605,635 530,700 550,760 580,800 555,850 590,900 700,900 750,870 740,830
E 380,820 460,790 520,795 640,825
E 640,900 655,940 590,995 430,1000
E 415,980 500,965 620,960
E 150,965 210,970 320,995 415,980
E 0,910 110,910 155,890 215,885 280,900 290,905
E 140,965 170,935 280,905 350,865
E 160,825 190,828 240,840 290,835 350,860
E 190,1045 300,1110 390,1160 455,1195
E 440,1070 570,1065 580,1080
E 440,1115 530,1130 550,1150 620,1140
E 260,1195 320,1190 350,1215 600,1215 670,1225 655,1265 690,1320 690,1385 610,1440 520,1475 400,1515
E 90,1332 135,1335 175,1325 285,1320 385,1320
E 200,1520 270,1490 325,1435 370,1440
E 1525,440 1400,525 1365,560 1370,610 1390,660 1388,710
E 1525,980 1495,1035 1505,1060 1465,1100 1465,1150 1430,1190
E 370,600 410,550 480,530
E 500,530 580,465 640,440
E 660,10 720,10 740,35`.split('\n');
const inner=`A 380,655 600,665 690,700
A 740,810 800,850 890,860
A 560,340 700,460 830,520 1100,660
A 960,65 1000,190 1120,260
A 900,200 950,240 1100,220
A 500,910 600,930 690,1000 880,990 1000,930 1130,940 1200,970
A 1075,730 1110,530 1090,480
A 850,1060 860,1200 820,1340 830,1540
A 600,1320 800,1340 1000,1330 1080,1310
B 560,320 680,300 640,470 580,640
B 540,390 620,300 700,350
B 650,600 720,690 850,700
B 320,540 250,700 380,720
B 700,870 830,830 930,870
B 1140,800 1150,960 1060,1040
B 1040,1100 1030,1200 1120,1320
B 1335,1170 1320,1320
D 820,330 960,400 1190,410 1280,380 1400,385
D 1280,330 1270,400 1150,500 1050,550 990,680
D 990,60 1110,100 1240,350
D 660,540 720,640 740,790
D 300,300 290,560 310,800 320,960
D 370,390 480,360 600,370 650,420
D 620,640 820,570
C 680,780 700,860 690,910
C 1000,620 960,680 850,840 780,950
C 690,810 750,830 930,790
C 940,800 1100,795 1190,770
C 760,450 850,440 880,420
C 990,380 980,520
C 840,0 830,200 900,260 990,280`.split('\n');
const travel='A 155,1330 160,1290 180,1275 240,1233 380,1225 470,1135 430,1080 350,1020 260,985 235,965 265,935 275,905 320,890 380,875 410,835 430,740 450,715 480,697 585,705 625,725 690,775 745,670 770,600 790,535 835,520 895,518 940,480 965,435 990,295 1015,305 1005,265 1075,228 1105,240 1135,290 1140,340 1090,365 1050,365 1040,435 1090,458 1120,445 1155,360 1205,375 1240,450 1265,515 1300,545 1345,540 1385,555 1410,560 1440,590 1500,622 1565,620 B 215,615 270,655 320,685 450,735 500,725 560,730 595,745 625,650 680,560 725,545 760,590 795,680 860,725 930,752 1040,780 1040,975 980,1075 970,1150 965,1310 D 965,105 905,155 845,155 845,245 830,310 825,370 810,290 785,185 725,165 680,220 680,470 650,530 570,530 520,520 480,550 430,650 370,730 335,838 290,838 225,800 210,760 180,765 170,805 125,815 45,800 35,745 C 1435,640 1380,560 1300,530 1200,575 1090,605 1055,640 1025,725 950,725 910,720 880,765 845,760 810,660 745,580 725,480 665,400 565,360 540,240 480,200 400,200 380,215 290,135 250,115 195,130 165,50';
const loop='D 210,385 250,400 275,460 250,540 210,585 175,540 170,440';
const river='D 110,90 150,150 158,230 135,265 110,262 105,290 130,330 128,560 120,760 118,850 100,905 140,915 180,865 165,850 165,770 195,735 180,690 165,620 180,560 165,470 175,370 185,270 215,195 170,160 150,120 130,90';
const names=[['Purcellville',1180,597,129],['Leesburg',1387,634,107],['Ashburn',1492,753,97],['Dale City',1689,1420,99],['Bennsville',2101,1479,118],['Waldorf',2247,1452,90],['Odenton',2510,677,93],['Severn',2545,612,78],['Chesapeake',2713,1322,139],['Beach',2748,1354,70],['Linton Hall',1365,1229,123],['Manassas',1499,1244,115],['Centreville',1554,1094,123],['Marine Corps',1465,1545,129],['ton',1169,1306,31]];
const over=[['Potomac',1850,797,103,25],['Silver Spring',2054,835,169,31],['Washington D.C.',1986,1007,284,40],['Fairfax',1731,1086,92,31],['Burke',1784,1201,66,28],['Alexandria',2043,1154,142,32],['Suitland',2228,1081,92,26],['Camp Springs',2217,1155,161,25],['Rosaryville',2363,1234,123,26],['B',2489,925,16,29]];

define('zip-map',`<style>:host{display:block;width:1900px;height:961px;background:#f1f1f0}svg{display:block}</style><div id="m"></div>`,function(r){
  const poly=(s,a)=>`<polygon points="${pts(s)}" ${a}/>`,pl=s=>`<polyline points="${pts(s)}"/>`;
  const txt=(t,x,y,w,s,a)=>`<text x="${x}" y="${y}" font-size="${s}" textLength="${w}" lengthAdjust="spacingAndGlyphs" ${a}>${t}</text>`;
  r.getElementById('m').innerHTML=`<svg width="1900" height="961" viewBox="1169 576 1900 961" font-family="Roboto,'Liberation Sans',sans-serif">
  <defs><linearGradient id="g" x1="0" x2="1" y1="0" y2="1"><stop offset="0" stop-color="#f3f3f2"/><stop offset=".5" stop-color="#f0f0ef"/><stop offset="1" stop-color="#f2f2f1"/></linearGradient>
  <clipPath id="oc">${poly(outline,'')}</clipPath>
  <mask id="tm" maskUnits="userSpaceOnUse" x="1169" y="576" width="1900" height="961"><g fill="none" stroke-linejoin="round"><g stroke="#fff" stroke-width="13">${poly(travel,'')}${poly(loop,'')}</g><g stroke="#000" stroke-width="4.500">${poly(travel,'')}${poly(loop,'')}</g></g></mask></defs>
  <rect x="1169" y="576" width="1900" height="961" fill="url(#g)"/>
  <g fill="#ebedec">${poly('F 640,830 680,795 745,930 745,1170 560,1110 560,990 640,990','')}${poly('F 560,20 900,20 930,100 1030,230 960,350 780,380 680,330 640,200 560,130','fill-opacity=".6"')}${poly('B 950,300 1180,250 1400,400 1430,540 1350,790 1200,780 1160,570 980,420','fill-opacity=".6"')}${poly('F 170,1200 280,1030 260,1150 220,1390 180,1400','fill-opacity=".8"')}</g>
  <g fill="#cbd1d3">${water.map(s=>poly(s,'')).join('')}</g>
  <g fill="#f2f2f0">${isles.map(s=>poly(s,'')).join('')}</g>
  <g fill="none" stroke="#cbd1d3" stroke-linejoin="round"><g stroke-width="8">${pl('F 545,20 555,130 628,190 655,290 690,345 760,380 830,408')}</g><g stroke-width="12">${pl('F 830,412 940,412 990,460 1040,490')}</g>
  <g stroke-width="6">${pl('D 1410,1000 1420,1040 1450,1060 1440,1095 1415,1110 1470,1160 1440,1220 1445,1290 1495,1320 1515,1370 1510,1440')}${pl('E 125,1450 130,1490 100,1530 95,1565')}${pl('C 170,740 180,690 230,645 245,690 215,710 270,790 310,755 360,780 420,770 430,820 480,830 520,800')}${pl('C 310,1250 340,1260 370,1295')}${pl('C 610,870 590,930')}${pl('C 590,1390 690,1430')}</g>
  <g stroke-width="2.500">${pl('B 460,0 480,15 500,5')}${pl('A 1180,0 1185,70')}${pl('A 370,140 410,100')}</g></g>
  <g fill="none" stroke="#d6dadc" stroke-width="1.200">${pl('A 200,90 240,100 300,50 290,160 380,200 400,260')}${pl('B 890,230 910,340 1020,345 1060,420 1190,470 1230,560 1310,600 1350,690 1390,720 1450,1000 1480,1110')}${pl('F 15,840 80,740 210,680 200,630 130,590')}${pl('F 350,555 400,640 500,650 510,580')}${pl('C 0,350 60,430 110,500 20,540')}</g>
  <g fill="none" stroke="#b9b9b9" stroke-width="2.500" stroke-dasharray="14 6">${pl('F 538,20 550,130 628,195 655,290 680,370 760,410 870,437 935,430 1020,490')}${pl('C 1208,915 1300,840 1390,785')}${pl('C 1175,1170 1035,1210')}${pl('C 900,1255 740,1375 725,1440')}</g>
  <g fill="none" stroke-linejoin="round" stroke-linecap="round"><g stroke="#dfdfdf" stroke-width="4.200">${minor.map(pl).join('')}</g><g stroke="#fdfdfd" stroke-width="2.200">${minor.map(pl).join('')}</g>
  <g stroke="#dadada" stroke-width="6.500">${major.map(pl).join('')}</g><g stroke="#fff" stroke-width="4.200">${major.map(pl).join('')}</g></g>
  <g fill="#a3a3a3" stroke="#fafafa" stroke-width="5" paint-order="stroke" stroke-linejoin="round">${names.map(n=>txt(n[0],n[1],n[2],n[3],27,'')).join('')}</g>
  <g style="isolation:isolate">${poly(outline,`fill="${ramp[2]}" stroke="#d4d7d9" stroke-width="3" stroke-linejoin="round"`)}
  <g stroke="#d0d3d6" stroke-width="1.700" stroke-linejoin="round">${zips.map(z=>poly(z.slice(2),`fill="${ramp[z[0]]}"`)).join('')}</g>
  <g fill="none" stroke="#d0d3d6" stroke-width="1.700">${lines.map(pl).join('')}</g>
  <g fill="none" stroke="#c9e4f8" stroke-opacity=".1" stroke-width="3" stroke-linejoin="round">${inner.map(pl).join('')}</g>
  ${poly(river,'fill="#ccd1d3" stroke="#d0d3d6" stroke-width="1.500"')}
  <g fill="#f3f3f2" stroke="#d0d3d6" stroke-width="1">${land2.map(s=>poly(s,'')).join('')}</g>
  <g clip-path="url(#oc)" style="mix-blend-mode:difference"><rect x="1169" y="576" width="1900" height="961" fill="rgb(56,37,3)" mask="url(#tm)"/></g></g>
  <g fill="none" stroke="#2f68d6" stroke-width="13">${pl('D 188,402 170,440 167,500 190,558')}${pl('D 120,818 162,806')}${pl('B 450,718 512,730')}</g><g fill="none" stroke="#fff" stroke-width="5">${pl('D 188,402 170,440 167,500 190,558')}${pl('D 119,818 163,806')}${pl('B 449,718 513,730')}</g>
  <g stroke="#fafafa" stroke-width="5" paint-order="stroke" stroke-linejoin="round">${txt('owie',2508,925,59,29,'fill="#666" font-weight="500"')}${txt('Annapolis',2771,864,132,29,'fill="#6a6a6a" font-weight="500"')}${txt('Kent Islan',2973,930,96,20,'fill="#8a8a8a"')}</g>
  <g fill="#1b2f5c">${over.map(n=>txt(n[0],n[1],n[2],n[3],n[4],`font-weight="${n[4]>28?500:400}" fill-opacity="${n[4]>28?.42:.24}"`)).join('')}</g>
  <path d="M2118 1035C2107 1009 2078 983 2078 962A40 40 0 0 1 2158 962C2158 983 2129 1009 2118 1035Z" fill="#5b8cdc"/>
  <path d="M2118 1016C2105 995 2088 979 2088 963A30 30 0 0 1 2148 963C2148 979 2131 995 2118 1016Z" fill="#fff" stroke="#000" stroke-width="6.500"/>
  <path d="M2118 952L2136 964.500L2118 976L2100 964.500Z"/><path d="M2106 970.500V974.500L2118 982.500L2130 974.500V970.500L2118 978.500ZM2133.500 965H2136.500V975H2133.500Z"/>
  <rect x="1186" y="593" width="64" height="181" rx="9" fill="#d9d9d9"/><rect x="1189" y="596" width="58" height="175" rx="7" fill="#fff"/><path d="M1189 655H1247M1189 713H1247" stroke="#ddd" stroke-width="2"/>
  <path d="M1209 625H1227M1218 616V634M1209 684H1227" stroke="#333" stroke-width="5.500" stroke-linecap="round"/><path d="M1210 741L1218 725L1226 741Z" fill="#333"/><path d="M1210 745H1226L1218 760Z" fill="#ccc"/>
  <g><circle cx="1204" cy="1503" r="19" fill="#f6f6f5" stroke="#9d9d9d" stroke-width="5"/><circle cx="1204" cy="1503" r="19" fill="none" stroke="#fff" stroke-width="1.500"/><path d="M1195 1513V1502A10.500 10 0 1 1 1205 1513Z" fill="#9d9d9d"/><path d="M1206 1495L1208 1500L1213 1502L1208 1504L1206 1509L1204 1504L1199 1502L1204 1500Z" fill="#fff"/>
  <g font-family="Inter,sans-serif" font-weight="600">${txt('mapbox',1229,1512,125,34,'fill="#fff" stroke="#9d9d9d" stroke-width="5" paint-order="stroke" stroke-linejoin="round"')}</g></g>
  <rect x="2537" y="1497" width="532" height="40" fill="#fff" fill-opacity=".5"/>
  <g font-family="'Liberation Sans',sans-serif" fill="#3c3c3c">${txt('© Mapbox © OpenStreetMap',2549,1526,308,24,'')}${txt('Improve this map',2867,1526,191,24,'font-weight="700" fill="#333"')}</g></svg>`;
});

define('trend-chip',`<style>:host{display:flex;height:52px;box-sizing:border-box;border:2px solid #c3e2c8;border-radius:5px;background:#f3f8ec;color:#161838;align-items:center;justify-content:center;gap:6px;padding-right:6px}
:host([down]){background:#fdf2e9;border-color:#e08a3c}:host([down]) svg{transform:rotate(90deg)}</style>
<slot></slot><svg width="19" height="19" viewBox="0 0 18 18"><path d="M3 2.200H15.800V15M15.500 2.500L2 16" fill="none" stroke="#161838" stroke-width="4"/></svg>`);

define('data-row',`<style>:host{display:grid;grid-template-columns:860px 336px 334px 364px 1fr;height:110.5px;box-sizing:border-box;align-items:center;border-bottom:2px solid #f3f3f5;padding-bottom:6px;color:#24264a}
:host([last]){border-color:transparent}:host([head]){height:109px;border:0;padding:6px 0 0;color:#000}
::slotted(*){justify-self:center}::slotted(.l){justify-self:start!important}</style><slot></slot>`);

define('population-table',`<style>:host{display:block;margin:27px 0 0 40px;width:1900px}
.v{color:#111}.sel{background:#b9d6fb}</style><div id="t"></div>`,function(r){
  const rows=[['Total School-Age Population',391,'10.3%',70,131,'683,066',102,'5.9%',61,120],['Male School-Age Population',393,'9.1%',52,113,'345,311',87,'5.7%',57,116],['Female School-Age Population',428,'11.6%',66,127,'337,755',93,'6.1%',53,112],['Families with Children 0-17',371,'6.1%',53,113,'365,724',97,'6.5%',61,120],['Enrolled PK-12 Private Schools',420,'-6.6%',69,129,'195,411',81,'0.9%',61,120]];
  r.getElementById('t').innerHTML=`<data-row head><t-line class="l" s="36" f="600" h="44" w="285">Population Data</t-line><t-line s="22.500" f="700" h="36" w="173" style="margin-top:8px">10-YR CHANGE</t-line><t-line s="22.500" f="700" h="36" w="161" style="margin-top:8px">2022 VALUES</t-line><t-line s="22.500" f="700" h="36" w="187" style="margin-top:8px">5-YR FORECAST</t-line></data-row>`+
  rows.map((d,i)=>`<data-row ${i==4?'last':''}><t-line class="l" s="29" f="500" h="40" w="${d[1]}">${d[0]}</t-line><trend-chip ${i==4?'down':''} style="width:${d[4]}px"><t-line s="26" f="700" h="36" w="${d[3]}">${d[2]}</t-line></trend-chip><t-line class="v ${i==4?'sel':''}" s="27" f="400" h="42" w="${d[6]}">${d[5]}</t-line><trend-chip style="width:${d[9]}px"><t-line s="26" f="700" h="36" w="${d[8]}">${d[7]}</t-line></trend-chip></data-row>`).join('');
});

define('map-legend',`<style>:host{display:flex;justify-content:space-between;margin:40px 33px 0 20px;height:71px}
.a{display:flex;align-items:center;gap:13px;height:44px;margin-top:5px}
.b{width:300px}.n{display:flex;justify-content:space-between;padding:0 4px 0 3px;color:#444;height:36px}.c{display:flex;height:30px}.c i{flex:1}</style>
<div class="a"><svg width="45" height="26" viewBox="0 0 45 26"><path d="M2 11Q11 8 16 4.500Q22.500 1 29 4.500Q34 8 43 11M2 23Q11 20 16 16.500Q22.500 13 29 16.500Q34 20 43 23" fill="none" stroke="#4b92d3" stroke-width="5.500"/></svg><t-line s="30" f="500" h="44" w="219">travel boundary</t-line></div>
<div class="b"><div class="n"><t-line s="24" h="30" w="22">17</t-line><t-line s="24" h="30" w="40">15K</t-line></div><div class="c"></div></div>`,function(r){
  r.querySelector('.c').innerHTML=['#c4e4c4','#b4dccb','#a0d2d0','#90c8d6','#82b8d6','#74a8cb','#6698c3','#568aba','#4a78aa','#436496'].map(c=>`<i style="background:${c}"></i>`).join('');
});

define('trend-panel',`<style>:host{display:block;box-sizing:border-box;width:2000px;height:2246px;margin-left:96px;background:linear-gradient(90deg,#fff 180px,#fff0 420px) 0 100%/100% 70px no-repeat,linear-gradient(#fff0,#f7f7f7 50%,#ebebeb) 0 100%/100% 60px no-repeat,#fff;border:solid #e8e9ee;border-width:0 2px;padding:0 47px 0 48px}
.head{display:flex;justify-content:space-between;padding-top:78px;height:106px}
.head .x{display:flex;flex-direction:column}
.sub{color:#4a4a4a}.title{color:#161838}
.dl{display:flex;gap:10px;align-items:center;color:#2f66d8;height:36px;margin-right:1px}
.select{display:flex;box-sizing:border-box;width:529px;height:84px;border:2px solid #e6e6ee;border-radius:9px;margin:58px 0 32px auto;align-items:center;justify-content:space-between;padding:0 18px 0 23px}
</style>
<data-tabs></data-tabs>
<div class="head"><div class="x"><t-line class="title" s="43" f="700" h="52" w="874">Total School-Age Population by ZIP Code</t-line><t-line class="sub" s="33" f="500" h="48" w="1026">Within a 30-Minute drive of 1129 20th St NW Ste 800, Washington</t-line></div>
<div class="dl"><svg width="32" height="34" viewBox="0 0 32 34"><path d="M16 0V24M6 15L16 25L26 15" fill="none" stroke="#2f66d8" stroke-width="3.500"/><path d="M0 31H32" stroke="#2f66d8" stroke-width="3.500"/></svg><t-line s="23" f="600" h="36" w="136">DOWNLOAD</t-line></div></div>
<div class="select"><t-line s="30" f="500" h="44" w="391">Total School-Age Population</t-line><svg width="19" height="12" viewBox="0 0 19 12"><path d="M1 1L9.500 10L18 1" fill="none" stroke="#777" stroke-width="2.500"/></svg></div>
<zip-map></zip-map><map-legend></map-legend><population-table></population-table>`);

define('chat-launcher',`<style>:host{position:absolute;left:40px;top:2280px;width:96px;height:96px;border-radius:50%;background:#2f66d8;box-shadow:0 2px 16px #0003;display:flex;align-items:center;justify-content:center}</style>
<svg width="42" height="48" viewBox="0 0 42 48"><path d="M7 0H35Q41 0 41 6V47L31 41H7Q1 41 1 35V6Q1 0 7 0Z" fill="#fff"/><path d="M8 29Q21 38 34 29" fill="none" stroke="#2f66d8" stroke-width="3" stroke-linecap="round"/></svg>`);

define('market-app',`<style>:host{display:block}main{display:flex;align-items:flex-start;height:2246px;background:linear-gradient(#24264a 110px,#f5f7fb 110px)}</style>
<window-edge></window-edge><top-nav></top-nav><main><side-menu></side-menu><trend-panel></trend-panel></main><chat-launcher></chat-launcher>`);
</script>
</body>
</html>
